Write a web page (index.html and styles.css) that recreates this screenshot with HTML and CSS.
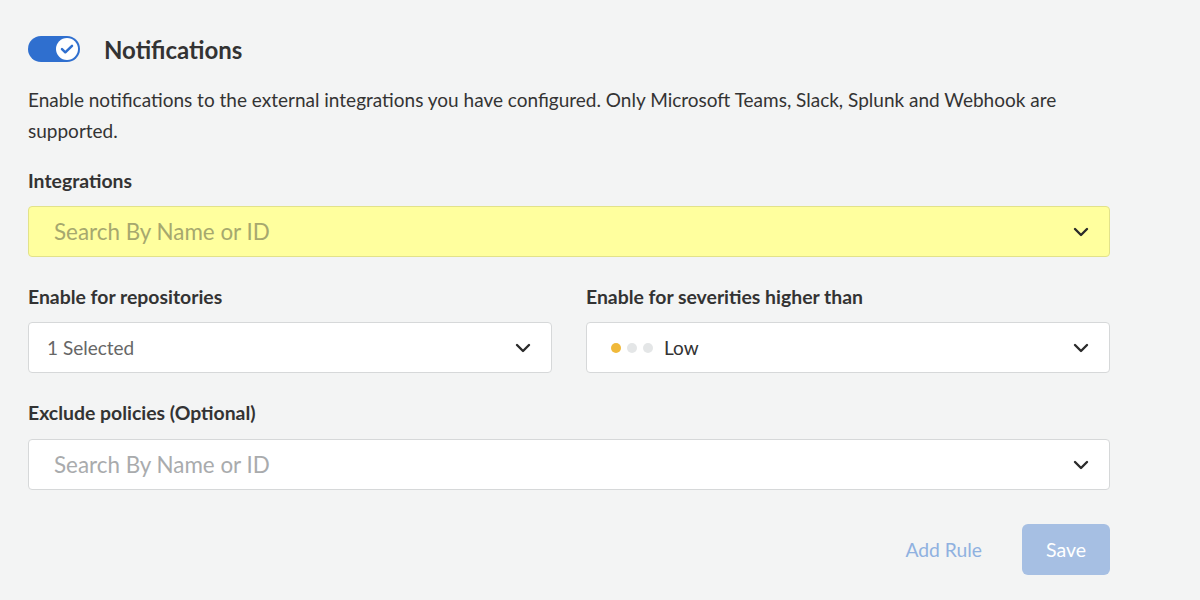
FILE: index.html
```html
<!DOCTYPE html>
<html>
<head>
<meta charset="utf-8">
<link rel="stylesheet" href="styles.css">
</head>
<body>
<div class="page">
  <div class="header">
    <div class="toggle"><span class="knob"><svg width="14" height="12" viewBox="0 0 14 12"><path d="M2 6.2 L5.3 9.3 L12 2.8" fill="none" stroke="#2f6fcf" stroke-width="2.5" stroke-linecap="round" stroke-linejoin="round"/></svg></span></div>
    <h1 class="title">Notifications</h1>
  </div>
  <p class="desc">Enable notifications to the external integrations you have configured. Only Microsoft Teams, Slack, Splunk and Webhook are supported.</p>

  <div class="field">
    <div class="label">Integrations</div>
    <div class="select select-hl">
      <span class="placeholder">Search By Name or ID</span>
      <svg class="chev" width="16" height="10" viewBox="0 0 16 10"><path d="M2 2 L8 8 L14 2" fill="none" stroke="#2b2b2b" stroke-width="2.4" stroke-linecap="round" stroke-linejoin="round"/></svg>
    </div>
  </div>

  <div class="row">
    <div class="field">
      <div class="label">Enable for repositories</div>
      <div class="select">
        <span class="value value-muted">1 Selected</span>
        <svg class="chev" width="16" height="10" viewBox="0 0 16 10"><path d="M2 2 L8 8 L14 2" fill="none" stroke="#2b2b2b" stroke-width="2.4" stroke-linecap="round" stroke-linejoin="round"/></svg>
      </div>
    </div>
    <div class="field">
      <div class="label">Enable for severities higher than</div>
      <div class="select">
        <span class="sev">
          <span class="dot dot-on"></span><span class="dot"></span><span class="dot"></span>
          <span class="value">Low</span>
        </span>
        <svg class="chev" width="16" height="10" viewBox="0 0 16 10"><path d="M2 2 L8 8 L14 2" fill="none" stroke="#2b2b2b" stroke-width="2.4" stroke-linecap="round" stroke-linejoin="round"/></svg>
      </div>
    </div>
  </div>

  <div class="field">
    <div class="label">Exclude policies (Optional)</div>
    <div class="select">
      <span class="placeholder">Search By Name or ID</span>
      <svg class="chev" width="16" height="10" viewBox="0 0 16 10"><path d="M2 2 L8 8 L14 2" fill="none" stroke="#2b2b2b" stroke-width="2.4" stroke-linecap="round" stroke-linejoin="round"/></svg>
    </div>
  </div>

  <div class="actions">
    <button class="link-btn">Add Rule</button>
    <button class="save-btn">Save</button>
  </div>
</div>
</body>
</html>
```
FILE: styles.css
```css
* { box-sizing: border-box; }
html, body {
  margin: 0;
  background: #f3f4f4;
  font-family: Lato, "Open Sans", sans-serif;
  color: #333;
}
.page {
  width: 1082px;
  margin-left: 28px;
  padding-top: 34px;
}
.header {
  display: flex;
  align-items: center;
  gap: 24px;
  height: 30px;
}
.toggle {
  width: 52px;
  height: 26px;
  border-radius: 13px;
  background: #2f6fcf;
  display: flex;
  align-items: center;
  justify-content: flex-end;
  padding-right: 2px;
}
.knob {
  width: 22px;
  height: 22px;
  border-radius: 50%;
  background: #fff;
  display: flex;
  align-items: center;
  justify-content: center;
}
.title {
  margin: 0;
  font-size: 24px;
  font-weight: 700;
  color: #333;
}
.desc {
  margin: 20px 0 0;
  font-size: 19px;
  line-height: 31px;
  color: #333;
}
.field { display: flex; flex-direction: column; flex: 1; }
.label {
  font-size: 19.4px;
  font-weight: 700;
  line-height: 24px;
  color: #333;
  margin-bottom: 13px;
}
.desc + .field { margin-top: 23px; }
.select {
  height: 51px;
  background: #fff;
  border: 1px solid #d6d8d9;
  border-radius: 4px;
  display: flex;
  align-items: center;
  justify-content: space-between;
  padding: 0 20px 0 25px;
}
.select-hl {
  background: #ffff9e;
  border-color: #e2e28a;
}
.placeholder {
  font-size: 22.4px;
  color: #a9abad;
}
.select-hl .placeholder { color: #a6a86e; }
.value { font-size: 19px; color: #333; }
.value-muted { color: #666; }
.row .select { padding-left: 18px; }
.row .field:last-child .select { padding-left: 24px; }
.row {
  display: flex;
  gap: 34px;
  margin-top: 28px;
}
.row + .field { margin-top: 28px; }
.row + .field .label { margin-bottom: 14px; }
.sev { display: flex; align-items: center; gap: 0; }
.dot {
  width: 10px;
  height: 10px;
  border-radius: 50%;
  background: #e4e6e7;
  margin-right: 6px;
}
.dot-on { background: #f0b93a; }
.sev .value { margin-left: 5px; }
.chev { flex: none; }
.actions {
  display: flex;
  justify-content: flex-end;
  align-items: center;
  gap: 40px;
  margin-top: 34px;
}
.link-btn {
  background: none;
  border: none;
  padding: 0;
  font-family: inherit;
  font-size: 19.3px;
  color: #8fb1e0;
}
.save-btn {
  width: 88px;
  height: 51px;
  border: none;
  border-radius: 6px;
  background: #a6bfe3;
  color: #fff;
  font-family: inherit;
  font-size: 19.5px;
}
```
